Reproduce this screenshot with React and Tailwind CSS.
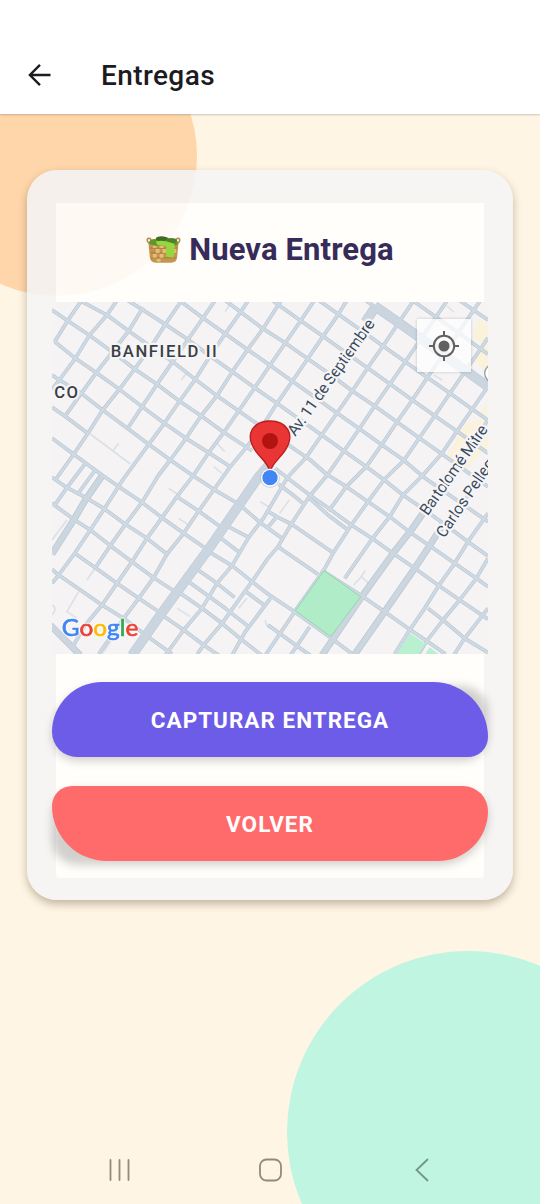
import React from "react";

const BLOCKS = [
  // cross streets, running down to the right
  "M1210 -8L1265 31L1308 60",
  "M1070 -8L1085 4L1152 51L1219 98L1308 163",
  "M905 -24L968 20",
  "M785 -10L859 43L926 90L993 138L1060 185L1127 233L1194 280L1261 328L1308 361",
  "M640 -14L679 14L746 62L813 109L880 157L947 204L1014 252L1081 300L1148 347L1215 394L1308 460",
  "M499 -14L566 36L633 86L700 129L767 176L834 223L901 273L968 318L1035 366L1102 414L1169 461L1236 509L1308 560",
  "M375 -4L453 54L520 101L587 149L654 196L721 244L788 291L855 339L922 386L989 434L1056 481L1113 530L1178 575L1308 665",
  "M215 -6L270 28L340 73L410 120L474 168L541 215L608 263L675 310L742 358L809 405L876 453L943 500L993 537L1053 585L1118 630L1188 680L1248 725L1308 768",
  "M80 0L165 45L230 93L297 140L362 185L430 238L495 287L560 333L640 388L717 440L775 480L823 522L883 560L948 605L1013 650L1078 700L1133 737L1208 790L1273 835L1308 860",
  "M0 30L47 62L112 106L180 155L248 207L315 253L382 303L448 348L515 397L600 452M670 505L708 535L773 585L833 627L898 675L963 717L1023 760L1088 805L1158 855L1223 900L1308 958",
  "M8 125L70 175L133 218L202 268L270 320L337 370L402 415L470 458L535 500",
  "M0 225L22 240L88 280L152 330L220 380L290 433L355 480L420 525L485 568L560 612L625 668L690 715",
  "M0 322L38 348L110 402",
  "M0 415L65 463L150 525L215 570L270 607L330 653L395 700L460 745",
  "M375 590L440 633L505 680",
  "M0 532L45 563L100 592L155 625L220 673L285 715L345 762",
  "M0 610L65 658L115 690L175 737L240 785L305 833L370 875",
  "M68 760L130 803L195 850L260 895L325 938",
  "M0 808L20 825L85 870L150 915L215 955L290 1012L360 1062",
  "M520 675L590 712M490 702L560 755M470 755L540 797L600 845L648 882L728 935L838 1015L905 1065",
  "M435 808L495 850L548 892M410 845L465 885L520 925L590 980M385 880L450 925L510 970L570 1020L630 1066",
  "M330 945L395 990L455 1035L500 1066",
  "M575 870L640 918M680 553L723 585L758 614M649 635L678 652L718 672L843 758",
  "M678 740L798 823M773 595L828 645L888 690",
  "M808 810L933 890L998 935L1068 985L1128 1025L1180 1062",
  "M1128 925L1173 960L1238 1015L1308 1058M648 975L738 1040L775 1066",
  // streets running down to the left
  "M90 0L47 62L8 125",
  "M200 -6L165 45L112 106L70 175L22 240L0 268",
  "M273 22L230 93L180 157L133 218L88 280L38 350",
  "M392 -3L340 73L297 140L248 207L202 268L152 330L108 400L65 463L10 540",
  "M494 -6L453 54L407 120L362 185L315 253L270 320L230 380",
  "M594 -6L566 36L520 101L474 168L430 238L383 303L337 370L290 433L212 540L158 625L115 690L68 760L20 825L0 850",
  "M694 -6L679 14L633 86L587 149L541 215L495 287L447 348L402 415L355 480L320 525L270 607L220 673L175 737L130 803",
  "M792 -6L746 62L700 129L654 196L608 263L560 333L515 398L470 458L425 525L375 590L330 653L285 715L240 785L195 850L150 915L100 975L65 1035",
  "M889 -6L859 43L813 109L767 176L721 244L675 310L630 380L585 440L535 500L485 570L440 633L395 700L345 762L305 833L260 895L215 955L140 1062",
  "M1090 -6L1039 70L993 138L947 204L901 273L855 339L809 405L763 472L708 530L690 560L634 655L590 712L540 797L495 850L450 925L395 990L340 1066",
  "M1191 -6L1152 51L1106 118L1060 185L1014 252L968 318L922 386L876 453L826 525L773 588L718 672L678 740L648 775L600 845L560 900L510 970L455 1035L436 1062",
  "M1290 -6L1265 31L1219 98L1173 165L1127 232L1081 300L1035 366L989 434L943 500L883 560L830 633",
  "M1308 113L1286 146L1240 213L1194 280L1148 347L1102 414L1056 481L998 537L948 605L898 675L843 760L813 815L728 935L640 1066",
  "M1308 260L1261 327L1215 394L1169 461L1113 525L1053 585L1013 650L958 720L878 835",
  "M1308 360L1215 500L1170 560M1308 490L1240 600L1183 675",
  "M1308 640L1248 725L1208 790L1158 860L1118 925L1073 990L1028 1062",
  "M1308 775L1273 835L1223 900L1173 960L1123 1025L1098 1066",
  "M1308 925L1238 1015L1205 1066M655 895L580 995L540 1066",
  "M100 490L45 563L5 620M130 510L75 585M773 980L733 1040L715 1066",
  "M674 650L645 686",
];

const AVENUES = [
  "M972 18L940 66",
  "M968 18L1060 82L1308 260",
  "M655 490L620 530L475 740L330 938L240 1066",
];

const BOULEVARDS = [
  "M1123 625L1078 690L1023 760L933 885L810 1066",
  "M1178 665L1133 737L1088 805L998 935L906 1066",
  "M152 525L100 600L65 660L0 762",
  "M-5 975L85 1066",
];

const LANES = [
  "M115 402L235 492M200 430L183 452M388 240L402 222M495 430L518 455M485 500L510 520M350 565L375 582M380 655L410 675",
  "M535 10L520 35M130 803L105 840M80 875L45 935L75 955M375 925L415 950M625 605L650 620M175 1025L150 1062M0 915Q18 925 0 945",
  "M905 855L928 830L950 850M922 838L940 812M560 925L585 895M640 960Q640 985 665 985M1145 225L1170 240M1185 18L1205 36M683 640L712 600M0 720L45 660",
];

const GOOGLE = [["G", "#4285f4"], ["o", "#ea4335"], ["o", "#fbbc05"], ["g", "#4285f4"], ["l", "#34a853"], ["e", "#ea4335"]];

function Basket() {
  return (
    <svg viewBox="0 0 36 30" className="h-[30px] w-[35px] shrink-0">
      <path d="M4 9C-1 5 2 1 5 4v5M32 9c5-4 2-8-1-5v5" fill="none" stroke="#b98b50" strokeWidth="1.700" />
      <path d="M2.500 7h31l-1.500 16q-1 5-6 5H10q-5 0-6-5Z" fill="#c39550" />
      <path d="M4 13h28M5 18h26M5.500 23h25" stroke="#a97737" strokeWidth="1" />
      <path d="M7 9h4v4H7zM14 9h4v4h-4zM10 14h4v4h-4zM17 14h4v4h-4zM7 19h4v4H7zM14 19h4v4h-4zM11 24h4v3h-4zM28 14h3v4h-3z" fill="#e2bd76" />
      <path d="M3 7Q5 3 11 4q7-4 13-1 7-1 9 4l-1 3q-9 2-14 0-8 2-14-1Z" fill="#62962a" />
      <ellipse cx="16" cy="3.500" rx="6" ry="2.600" fill="#426a26" />
      <ellipse cx="26.500" cy="5.500" rx="5" ry="2.500" fill="#4c8126" />
      <path d="M10 6.500q5-2 10-.5l8 2q3 2 1 7 1 4-1 8l-7-1q-1-6 0-11l-9-1Z" fill="#96d640" />
    </svg>
  );
}

function DeliveryMap() {
  return (
    <div className="relative h-[352px] overflow-hidden bg-[#f5f3f4] font-[Roboto,sans-serif]">
      <svg viewBox="0 6 1308 1056" className="block h-full w-full">
        <path d="M1280 55L1308 75V220L1260 180L1290 130L1262 110Z" fill="#fbf2dc" />
        <path d="M1308 300L1290 330L1278 345L1300 355M1308 350L1240 372L1185 470L1240 510L1308 440Z" fill="#fbf2dc" />
        <g fill="none" strokeLinejoin="round">
          <g stroke="#dbe1e6" strokeWidth="5">{LANES.map((d) => <path key={d} d={d} />)}</g>
          <g stroke="#b6c5d4" strokeWidth="11">{BLOCKS.map((d) => <path key={d} d={d} />)}</g>
          <g stroke="#b6c5d4" strokeWidth="20">{BOULEVARDS.map((d) => <path key={d} d={d} />)}</g>
          <g stroke="#b8c7d5" strokeWidth="29">{AVENUES.map((d) => <path key={d} d={d} />)}</g>
          <g stroke="#cfd9e2" strokeWidth="7.500">{BLOCKS.map((d) => <path key={d} d={d} />)}</g>
          <g stroke="#cbd6df" strokeWidth="16">{BOULEVARDS.map((d) => <path key={d} d={d} />)}</g>
          <g stroke="#cad5df" strokeWidth="26">{AVENUES.map((d) => <path key={d} d={d} />)}</g>
        </g>
        <path d="M816 812L926 890L836 1010L730 932Z" fill="#b1ecc8" stroke="#93d7ad" strokeWidth="3" />
        <path d="M1075 1000L1120 1030L1095 1066H1030ZM1133 1042L1165 1066H1118Z" fill="#b9f0cf" />
        <circle cx="1325" cy="220" r="27" fill="#fff" stroke="#9a9fa3" strokeWidth="4" />
        <g stroke="#f5f5f7" strokeWidth="13" strokeLinejoin="round" className="[paint-order:stroke]">
          <text x="176" y="172" fontSize="50" fontWeight="500" fill="#3c3f42" textLength="318">BANFIELD II</text>
          <text x="7" y="293" fontSize="50" fontWeight="500" fill="#3c3f42" textLength="71">CO</text>
          <g fill="#3b4a5a" fontSize="48">
            <text transform="translate(730 411) rotate(-54.700)" textLength="416">Av. 11 de Septiembre</text>
            <text transform="translate(1127 649) rotate(-55)" textLength="318">Bartolomé Mitre</text>
            <text transform="translate(1177 716) rotate(-56)" textLength="300">Carlos Pellegri</text>
          </g>
        </g>
        <path d="M654 514C646 488 628 476 612 455C573 400 607 363 654 363S735 400 697 455C680 478 662 490 654 514Z" fill="#ea3535" stroke="#b91c1c" strokeWidth="4" />
        <circle cx="654" cy="423" r="24" fill="#b31412" />
        <circle cx="654" cy="534" r="30" fill="#9aa5b1" opacity=".35" />
        <circle cx="654" cy="533" r="27" fill="#fff" />
        <circle cx="654" cy="533" r="23" fill="#4285f4" />
        <text x="29" y="1009" fontSize="69" fontFamily="Lato, sans-serif" textLength="230" lengthAdjust="spacingAndGlyphs" strokeWidth="2" className="[filter:drop-shadow(0_0_3px_#fff)_drop-shadow(0_0_2px_#fff)]">
          {GOOGLE.map(([letter, color], i) => <tspan key={i} fill={color} stroke={color}>{letter}</tspan>)}
        </text>
      </svg>
      <button aria-label="Mi ubicación" className="absolute top-[17px] right-[17px] flex h-[53px] w-[54px] items-center justify-center bg-white/75 shadow-[0_0_3px_rgba(0,0,0,0.2)]">
        <svg viewBox="0 0 30 30" className="size-[30px]" fill="none" stroke="#616161" strokeWidth="2">
          <circle cx="15" cy="15" r="10.200" />
          <circle cx="15" cy="15" r="5.500" fill="#616161" stroke="none" />
          <path d="M15 0v5M15 25v5M0 15h5M25 15h5" />
        </svg>
      </button>
    </div>
  );
}

export default function App() {
  return (
    <div className="relative isolate flex h-[1204px] w-[540px] flex-col overflow-hidden bg-[#fff5e4] font-[Roboto,sans-serif]">
      <div className="absolute top-4 -left-[83px] -z-10 size-[280px] rounded-full bg-[#ffd6aa]" />
      <div className="absolute top-[951px] left-[287px] -z-10 size-[362px] rounded-full bg-[#bff5e1]" />

      <header className="flex h-[114px] shrink-0 items-end bg-white pb-[22px] pl-[28px] shadow-[0_1px_2px_rgba(0,0,0,0.2)]">
        <svg viewBox="0 0 24 24" className="mb-[5px] h-6 w-[23px]" fill="none" stroke="#1c1b1f" strokeWidth="2.500">
          <path d="M23.500 12H2.500M12.500 1.500L2 12l10.500 10.500" />
        </svg>
        <h1 className="ml-[50px] text-[28px] leading-8 font-medium tracking-[0.4px] text-[#1c1b1f]">Entregas</h1>
      </header>

      <main className="mx-[27px] mt-14 h-[730px] shrink-0 rounded-[30px] border-x-[29px] border-t-[33px] border-b-[22px] border-[#f5f5f7]/86 bg-white/86 bg-clip-padding shadow-[0_4px_9px_rgba(70,50,20,0.33)]">
        <div className="-mx-1 flex flex-col">
          <div className="flex h-[99px] items-center justify-center gap-2 pb-[6px]">
            <Basket />
            <h2 className="text-[31px] leading-10 font-bold tracking-[0.12px] text-[#372b59]">Nueva Entrega</h2>
          </div>
          <DeliveryMap />
          <div className="relative isolate mt-7">
            <div className="absolute inset-x-0 top-1 -bottom-1 -z-10 rounded-[50px_26px_26px_26px] bg-black/18 blur-[4px]" />
            <button className="h-[75px] w-full rounded-[50px_55px_20px_25px] bg-[#6c5ce7] pt-[3px] text-[22.500px] font-bold tracking-[1px] text-white">CAPTURAR ENTREGA</button>
          </div>
          <div className="relative isolate mt-[29px]">
            <div className="absolute inset-x-0 top-1 -bottom-1 -z-10 rounded-[26px_26px_50px_26px] bg-black/18 blur-[4px]" />
            <button className="h-[75px] w-full rounded-[20px_25px_50px_55px] bg-[#ff6b6b] pt-[3px] text-[22.500px] font-bold tracking-[1px] text-white">VOLVER</button>
          </div>
        </div>
      </main>

      <nav className="mt-auto flex h-[68px] items-center justify-between px-[108px]">
        <svg viewBox="0 0 24 24" className="size-6" stroke="#96897b" strokeWidth="1.800" strokeLinecap="round"><path d="M2.500 2v20M11.500 2v20M20.500 2v20" /></svg>
        <svg viewBox="0 0 24 24" className="size-6" fill="none" stroke="#96897b" strokeWidth="1.800"><rect x="2" y="1.500" width="21" height="21" rx="6.500" /></svg>
        <svg viewBox="0 0 24 24" className="size-6" fill="none" stroke="#72968a" strokeWidth="1.800" strokeLinecap="round"><path d="M19.500 1.500L8.500 12l11 10.500" /></svg>
      </nav>
    </div>
  );
}
